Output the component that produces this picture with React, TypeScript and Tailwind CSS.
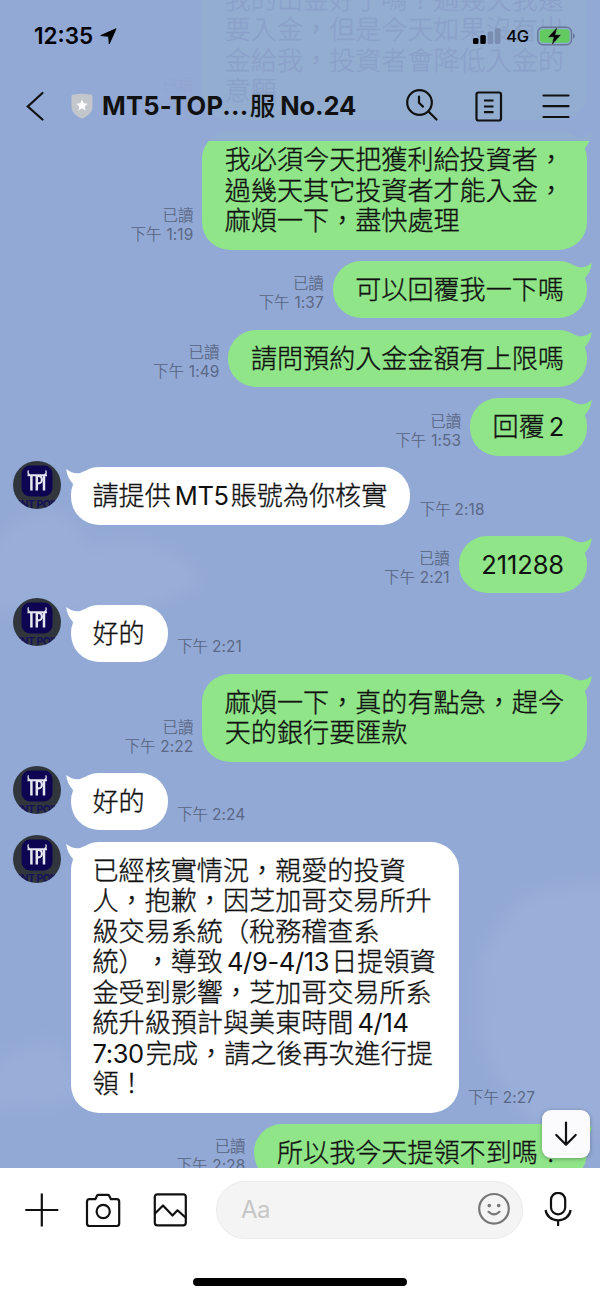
import type { ReactNode } from "react";
import clsx from "clsx";

interface Message {
  id: number;
  mine: boolean;
  lines: string[];
  time: string;
}

const MESSAGES: Message[] = [
  {
    id: 1,
    mine: true,
    lines: ["我的出金好了嗎？過幾天我還", "要入金，但是今天如果沒有出", "金給我，投資者會降低入金的", "意願"],
    time: "1:18",
  },
  {
    id: 2,
    mine: true,
    lines: ["我必須今天把獲利給投資者，", "過幾天其它投資者才能入金，", "麻煩一下，盡快處理"],
    time: "1:19",
  },
  { id: 3, mine: true, lines: ["可以回覆我一下嗎"], time: "1:37" },
  { id: 4, mine: true, lines: ["請問預約入金金額有上限嗎"], time: "1:49" },
  { id: 5, mine: true, lines: ["回覆2"], time: "1:53" },
  { id: 6, mine: false, lines: ["請提供MT5賬號為你核實"], time: "2:18" },
  { id: 7, mine: true, lines: ["211288"], time: "2:21" },
  { id: 8, mine: false, lines: ["好的"], time: "2:21" },
  { id: 9, mine: true, lines: ["麻煩一下，真的有點急，趕今", "天的銀行要匯款"], time: "2:22" },
  { id: 10, mine: false, lines: ["好的"], time: "2:24" },
  {
    id: 11,
    mine: false,
    lines: [
      "已經核實情況，親愛的投資",
      "人，抱歉，因芝加哥交易所升",
      "級交易系統（稅務稽查系",
      "統），導致4/9-4/13日提領資",
      "金受到影響，芝加哥交易所系",
      "統升級預計與美東時間4/14",
      "7:30完成，請之後再次進行提",
      "領！",
    ],
    time: "2:27",
  },
  { id: 12, mine: true, lines: ["所以我今天提領不到嗎？"], time: "2:28" },
];

// Latin runs get a little air next to the CJK characters around them
function Line({ text }: { text: string }) {
  const parts = text.split(/([\x21-\x7e]+)/).filter(Boolean);
  return (
    <div className="h-[30.5px] whitespace-nowrap">
      {parts.map((part, i) =>
        /^[\x21-\x7e]/.test(part) ? (
          <span
            key={i}
            className={clsx(
              "text-[25.5px] font-normal [-webkit-text-stroke-width:0px]",
              parts.length > 1 ? "tracking-[-0.35px]" : "tracking-[-0.1px]",
              i > 0 && "ml-[4px]",
              i < parts.length - 1 && "mr-[2px]"
            )}
          >
            {part}
          </span>
        ) : (
          part
        )
      )}
    </div>
  );
}

function Avatar() {
  return (
    <svg viewBox="0 0 48 48" className="-mt-[6.5px] mr-[9.5px] size-12 shrink-0 self-start rounded-full">
      <rect width="48" height="48" fill="#30363b" />
      <rect x="8.5" y="4.500" width="31" height="31" rx="8.5" fill="#0d0551" />
      <g fill="none" stroke="#e6e6f0">
        <path d="M14.500 14.200h19.500" strokeWidth="2" />
        <path d="M16.800 13.600c-1.700-.5-2.200-1.900-1.400-4.200M31.400 13.600c1.700-.5 2.200-1.900 1.400-4.200" strokeWidth="1.300" />
        <path d="M18.400 14.500v15M23.800 14.500v15M31 14.500v15" strokeWidth="2.500" />
        <path d="M24 15h1.400a3.500 3.700 0 0 1 0 7.400h-1.400" strokeWidth="2.200" />
      </g>
      <text x="1.500" y="46.500" fontSize="10.500" fontWeight="700" letterSpacing="-.5" fill="#15115c" fontFamily="Inter, sans-serif">
        ENT POIN
      </text>
    </svg>
  );
}

function Tail({ mine }: { mine: boolean }) {
  return (
    <svg
      viewBox="0 0 18 20"
      className={clsx(
        "absolute top-0 h-5 w-[18px]",
        mine ? "-right-[5px] text-[#8fe588]" : "-left-[5px] -scale-x-100 text-white"
      )}
    >
      <path d="M0 4C5 8 12 6.500 17.800 2C17.400 8 14.500 13 11 17L4 14Z" fill="currentColor" />
    </svg>
  );
}

function MessageRow({ message }: { message: Message }) {
  const { mine, lines, time } = message;
  return (
    <li className={clsx("flex items-end", mine ? "justify-end pr-[13px]" : "pl-[13px]")}>
      {!mine && <Avatar />}
      <div
        className={clsx(
          "relative rounded-[28px] pt-[14px] pb-[13px] text-[26.1px] leading-[30.5px] text-[#111]",
          mine ? "bg-[#8fe588] pr-[23px] pl-[22.5px]" : "bg-white pr-[23px] pl-[22px]"
        )}
      >
        <Tail mine={mine} />
        <div className="relative font-light [-webkit-text-stroke-width:0.35px] [text-spacing-trim:space-all]">
          {lines.map((line) => (
            <Line key={line} text={line} />
          ))}
        </div>
      </div>
      <div
        className={clsx(
          "mb-[6px] text-[15.4px] leading-[19px] font-light whitespace-nowrap text-[#55637f] [-webkit-text-stroke-width:0.2px]",
          mine ? "order-first mr-[9px] text-right" : "ml-[9.5px]"
        )}
      >
        {mine && <div>已讀</div>}
        <div>
          下午
          <span
            className={clsx(
              "font-normal tracking-[0.1px] text-[#5a6885] [-webkit-text-stroke-width:0px]",
              mine ? "ml-[5px]" : "ml-[4px]"
            )}
          >
            {time}
          </span>
        </div>
      </div>
    </li>
  );
}

function Clouds() {
  return (
    <svg viewBox="0 0 600 1168" className="absolute inset-0 h-full w-full">
      <defs>
        <filter id="soft" x="-20%" y="-20%" width="140%" height="140%">
          <feGaussianBlur stdDeviation="8" />
        </filter>
      </defs>
      <g filter="url(#soft)">
        <path d="M-10 550Q20 510 50 512Q75 515 90 550Q120 535 150 545Q185 555 200 580Q150 620 60 615L-10 610Z" fill="#98aed8" />
        <path d="M480 960Q495 930 520 900Q560 882 620 884V1130H540Q480 1070 480 1020Z" fill="#99afd9" />
        <path d="M-10 1070Q20 1045 50 1042Q80 1055 80 1100L-10 1110Z" fill="#98aed9" />
      </g>
    </svg>
  );
}

function StatusBar() {
  return (
    <div className="flex h-[72px] items-center pr-[25px] pl-[34px] text-black">
      <span className="text-[22.5px] font-semibold">12:35</span>
      <svg viewBox="0 0 18 18" className="ml-[6.5px] size-[17px]">
        <path d="M17 .8L.8 8l8.400.8.600 8z" fill="currentColor" stroke="currentColor" strokeLinejoin="round" />
      </svg>
      <svg viewBox="0 0 28 16" className="ml-auto h-4 w-7">
        <rect x="0" y="10" width="5.500" height="6" rx="1.500" />
        <rect x="7.300" y="7" width="5.500" height="9" rx="1.500" />
        <rect x="14.600" y="3.500" width="5.500" height="12.500" rx="1.500" fill="#7b8db0" />
        <rect x="21.900" y="0" width="5.500" height="16" rx="1.500" fill="#7b8db0" />
      </svg>
      <span className="ml-[5px] text-[16.5px] font-medium tracking-[-0.2px]">4G</span>
      <svg viewBox="0 0 38 20" className="ml-[8px] h-5 w-[38px]">
        <rect x=".8" y="1.300" width="33.700" height="17.400" rx="5" fill="none" stroke="#66779b" strokeWidth="1.400" />
        <rect x="2.700" y="3.200" width="29.900" height="13.600" rx="3.500" fill="#63c961" />
        <path d="M36 7q3.600 3 0 6z" fill="#66779b" />
        <path d="M20.500 .8L10.800 11.200h5.700l-2 8.300 9.700-10.800h-5.700z" fill="#000" stroke="#8fb89c" strokeWidth=".5" />
      </svg>
    </div>
  );
}

function Icon({ className, children }: { className?: string; children: ReactNode }) {
  return (
    <svg
      viewBox="0 0 36 36"
      fill="none"
      stroke="currentColor"
      strokeWidth="2.200"
      strokeLinecap="round"
      strokeLinejoin="round"
      className={clsx("size-9 shrink-0", className)}
    >
      {children}
    </svg>
  );
}

function Header() {
  return (
    <header className="absolute inset-x-0 top-0 h-[141px] bg-[#93a9d5]/94">
      <StatusBar />
      <div className="flex h-[68px] items-center pr-[26px] pl-[17px] text-[#111]">
        <Icon>
          <path d="M25.500 5L10.800 18.500 25.500 31.500" strokeLinejoin="miter" />
        </Icon>
        <svg viewBox="0 0 22 26" className="ml-[17.500px] h-[26px] w-[22px]">
          <path d="M1.500 1.800Q11-.4 20.500 1.800Q21.500 2 21.500 3V13.500C21.500 19.500 16 23.500 11 25.500C6 23.500 .5 19.500 .5 13.500V3Q.5 2 1.500 1.800Z" fill="#c3c6ca" />
          <path d="M11 6.500l1.700 3.800 4.100.4-3.100 2.700.9 4.100-3.600-2.200-3.600 2.200.9-4.100-3.100-2.700 4.100-.4z" fill="#fff" />
        </svg>
        <h1 className="ml-[9.500px] text-[25.5px] font-bold whitespace-nowrap">
          <span className="tracking-[0.25px]">MT5-TOP...</span>
          <span className="ml-px font-medium">服</span>
          <span className="ml-[5px] tracking-[-0.1px]">No.24</span>
        </h1>
        <Icon className="mr-[31px] ml-auto">
          <circle cx="15.500" cy="14.500" r="12.300" />
          <path d="M24.500 23.500L32.500 31.500M15 8.500v6.300l4 3.800" />
        </Icon>
        <Icon className="mr-[30px]">
          <rect x="5.500" y="4.500" width="24.500" height="28" rx="2" />
          <path d="M13 12.500h9.500M13 18.500h9.500M13 24.200h9.500" strokeLinecap="butt" />
        </Icon>
        <Icon className="mr-px">
          <path d="M6.500 7.500h25M6.500 18.200h25M6.500 29h25" />
        </Icon>
      </div>
    </header>
  );
}

function Composer() {
  return (
    <footer className="relative h-[131px] shrink-0 bg-white">
      <div className="flex h-[83px] items-center pr-[24px] pl-[24px] text-[#111]">
        <Icon>
          <path d="M17.800 1.500v33M1.300 18h33" strokeLinecap="butt" />
        </Icon>
        <Icon className="ml-[25px]">
          <path d="M4.500 7.200h5.800l1.700-3.500q.4-.8 1.300-.8h9.600q.9 0 1.300.8l1.700 3.500h5.800q2.500 0 2.500 2.500v21.800q0 2.500-2.500 2.500h-27.200q-2.500 0-2.500-2.500v-21.800q0-2.500 2.500-2.500z" />
          <circle cx="18.200" cy="19.500" r="6.600" />
        </Icon>
        <Icon className="ml-[30px]">
          <rect x="3.800" y="2.300" width="31" height="31" rx="2.500" />
          <path d="M4 21.500l8-8 9.500 10 5-5.200 8 7.200" />
        </Icon>
        <div className="ml-[29px] flex h-[58px] w-[307px] items-center rounded-full border border-[#ebebeb] bg-[#f4f4f4] pr-[10px] pl-[24px]">
          <span className="text-[24px] tracking-[-0.5px] text-[#c6c6c6]">Aa</span>
          <Icon className="ml-auto text-[#777]">
            <circle cx="18" cy="16.800" r="14.800" />
            <circle cx="13.300" cy="13.600" r="1.800" fill="currentColor" stroke="none" />
            <circle cx="22.700" cy="13.600" r="1.800" fill="currentColor" stroke="none" />
            <path d="M12.500 19.800q5.500 5.200 11 0" />
          </Icon>
        </div>
        <Icon className="ml-auto">
          <rect x="11" y=".8" width="14.200" height="21.500" rx="7.100" />
          <path d="M5.600 18c.8 6 5.800 10.300 12.500 10.300s11.700-4.300 12.500-10.300M18.100 28.600v5.500" strokeLinecap="butt" />
        </Icon>
      </div>
      <div className="mx-auto mt-[27px] h-[8px] w-[214px] rounded-full bg-black" />
    </footer>
  );
}

export default function App() {
  return (
    <div
      lang="zh-TW"
      className="relative flex h-[1299px] w-[600px] flex-col overflow-hidden bg-white font-['Inter','Noto_Sans_CJK_TC',sans-serif]"
    >
      <main className="relative h-[1168px] shrink-0 overflow-hidden bg-[#93a9d5]">
        <Clouds />
        <ul className="relative -mt-[29.3px] flex flex-col gap-[11.3px]">
          {MESSAGES.map((message) => (
            <MessageRow key={message.id} message={message} />
          ))}
        </ul>
        <button className="absolute right-[10px] bottom-[10px] flex size-12 items-center justify-center rounded-[9px] bg-[#fbfbfd] text-[#111] shadow-[0_1px_4px_rgba(0,0,0,0.3)]">
          <Icon>
            <path d="M18 6.500v22M8.300 19L18 28.700 27.700 19" />
          </Icon>
        </button>
      </main>
      <Composer />
      <Header />
    </div>
  );
}
